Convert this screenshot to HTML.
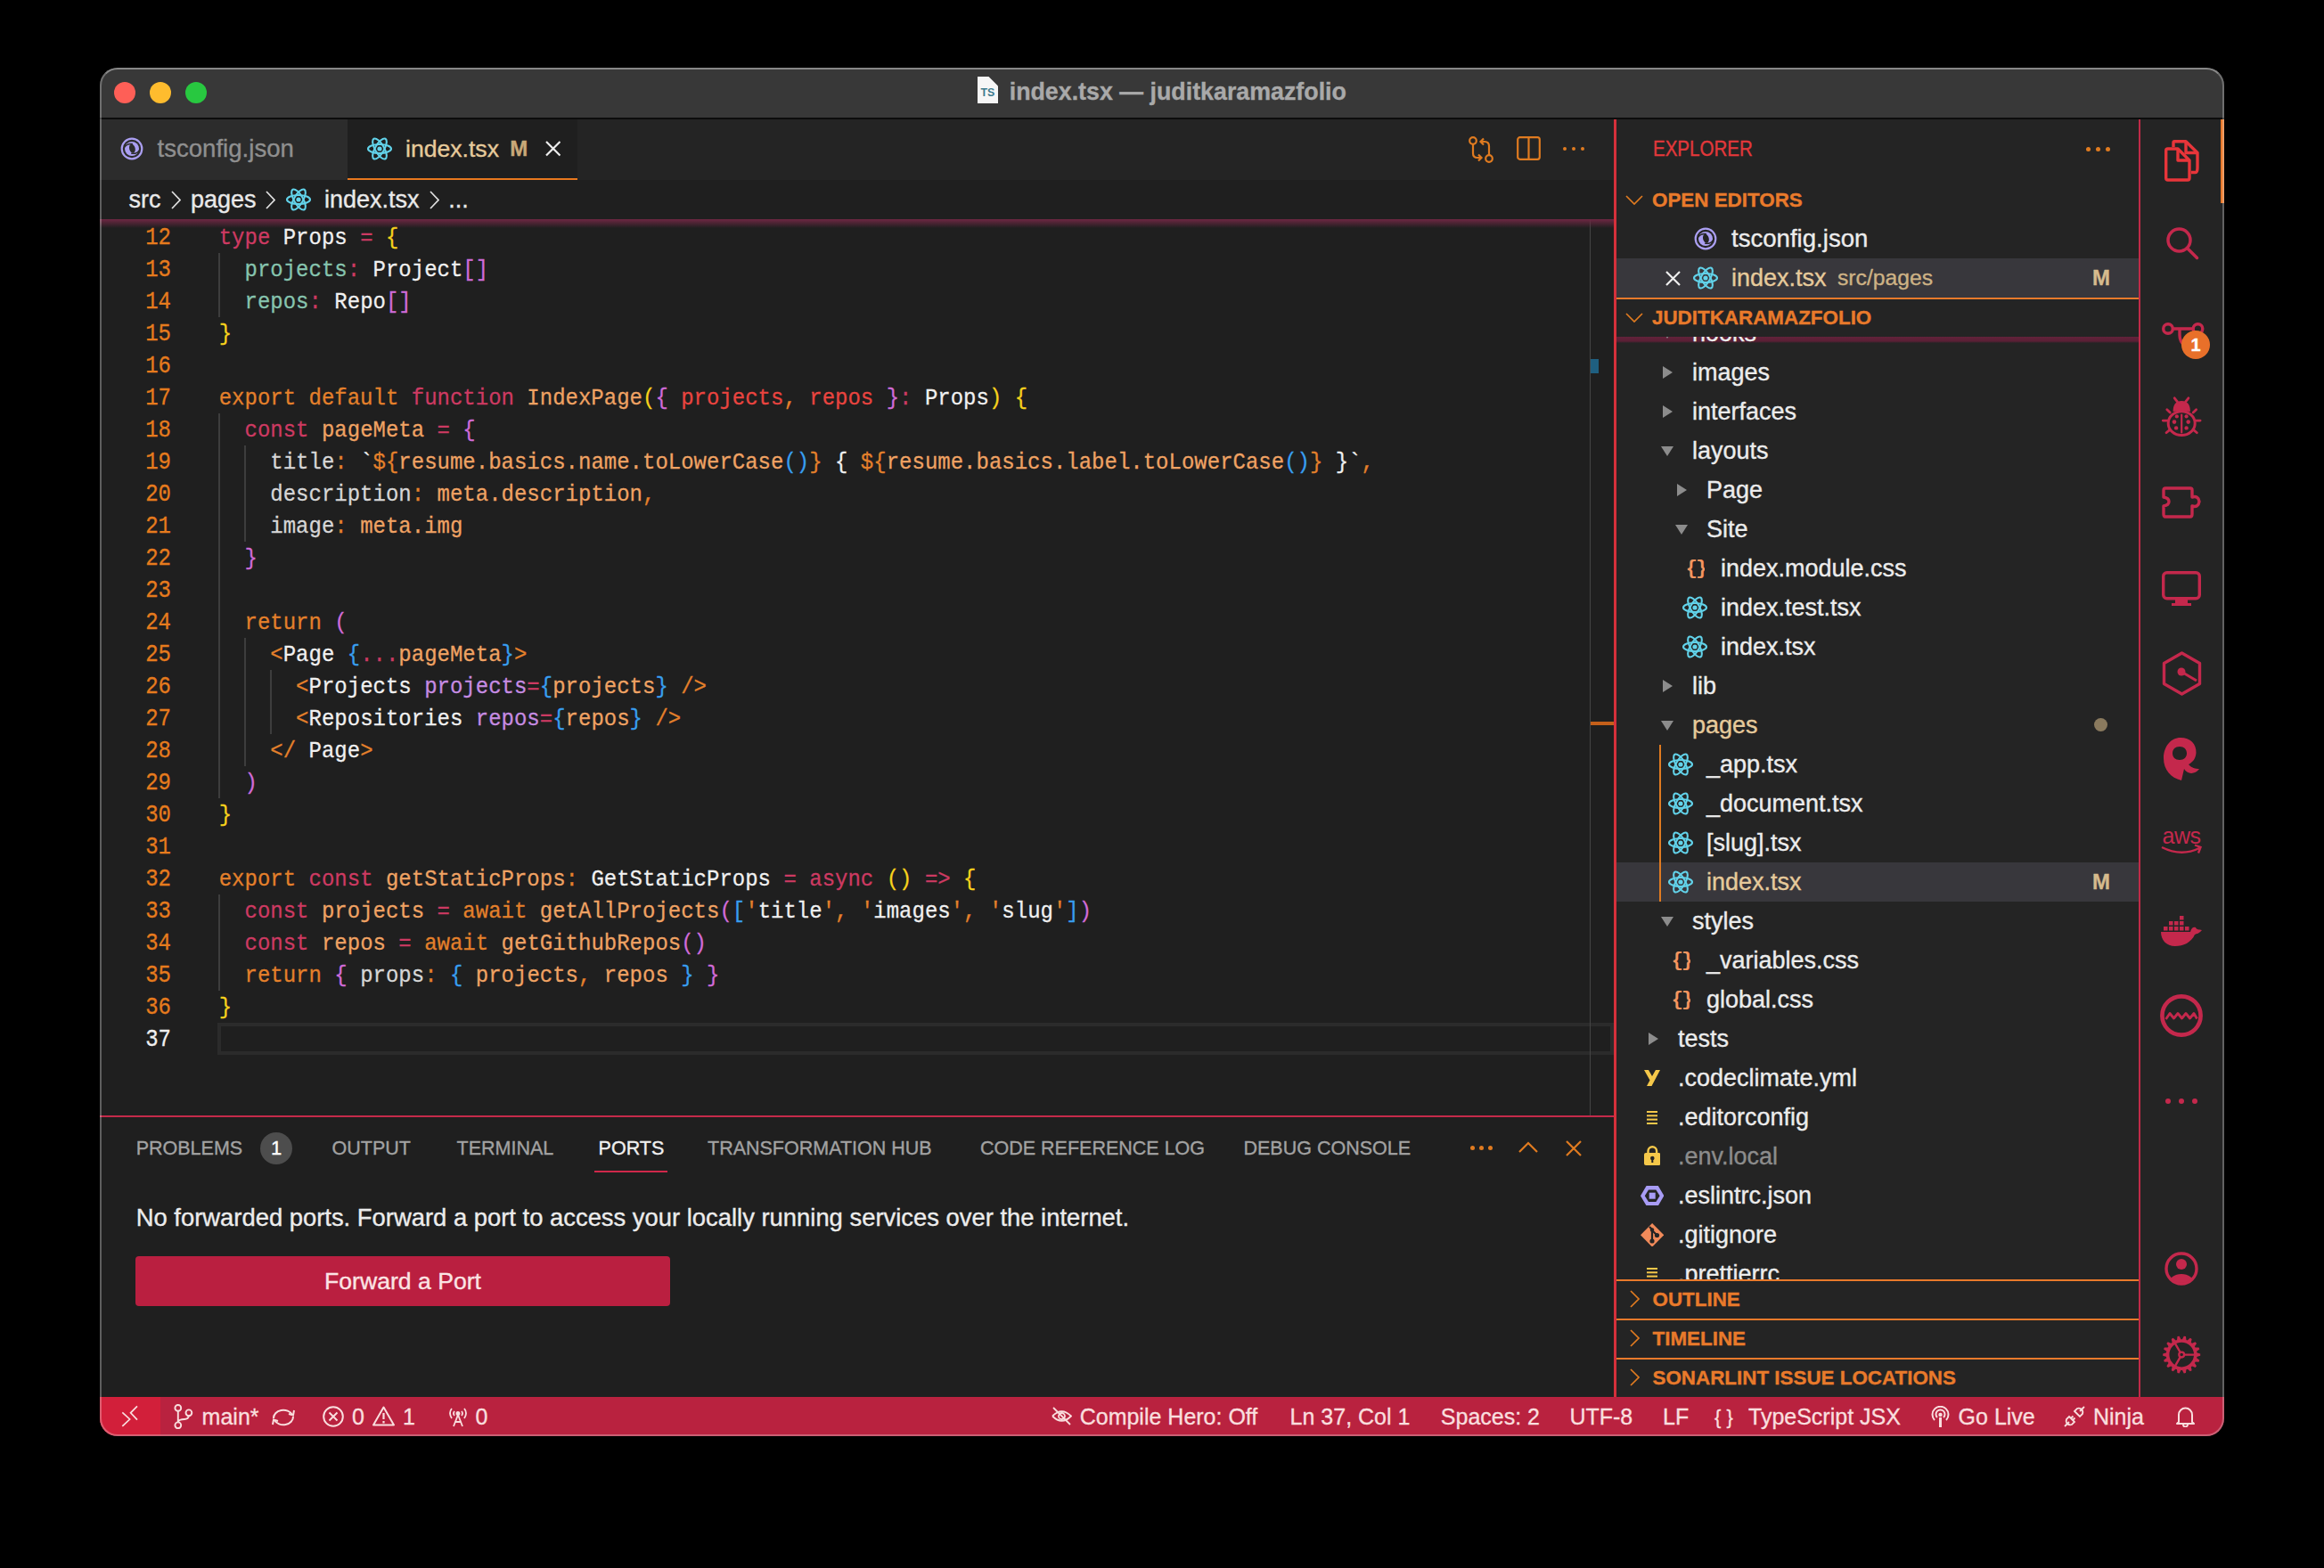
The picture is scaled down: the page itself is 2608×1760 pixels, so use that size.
<!DOCTYPE html>
<html><head><meta charset="utf-8"><style>
*{margin:0;padding:0;box-sizing:border-box}
html,body{width:2608px;height:1760px;background:#000;overflow:hidden}
body{font-family:"Liberation Sans",sans-serif;position:relative;-webkit-text-stroke:0.35px currentColor}
.a{position:absolute}
.win{position:absolute;left:112px;top:76px;width:2384px;height:1536px;border-radius:20px;overflow:hidden;background:#1f1f1f}
.winborder{position:absolute;left:112px;top:76px;width:2384px;height:1536px;border-radius:20px;border:2px solid rgba(255,255,255,0.28);border-top-color:rgba(255,255,255,0.40);pointer-events:none;z-index:10}
.title{left:0;top:0;width:2384px;height:57.5px;background:#383838;border-bottom:2.2px solid #0c0c0c;z-index:3}
.dot{position:absolute;width:24.5px;height:24.5px;border-radius:50%;top:15.75px}
.ttl{position:absolute;top:-1px;height:56px;line-height:56px;font-weight:700;font-size:26.8px;color:#a9a9a9;white-space:pre}
.tabs{left:0;top:56px;width:1699px;height:70px;background:#242424}
.tab{position:absolute;top:0;height:70px;line-height:70px;font-size:27px;white-space:pre}
.crumbs{left:0;top:126px;width:1699px;height:44px;background:#1f1f1f;font-size:27px;line-height:44px;color:#e9e9e9;white-space:pre}
.editor{left:0;top:170px;width:1699px;height:1006px;background:#1f1f1f;overflow:hidden}
.code{position:absolute;left:133.7px;font-family:"Liberation Mono",monospace;font-size:24px;line-height:36px;white-space:pre;color:#eeeeee}
.ln{position:absolute;left:0;width:80px;height:36px;text-align:right;font-family:"Liberation Mono",monospace;font-size:24px;line-height:36px;color:#e67b1d;transform:scaleY(1.13);transform-origin:0 24.4px;-webkit-text-stroke:0.25px currentColor}
.cl{position:absolute;left:133.7px;height:36px;font-family:"Liberation Mono",monospace;font-size:24px;line-height:36px;white-space:pre;color:#eeeeee;transform:scaleY(1.11);transform-origin:0 24.4px;-webkit-text-stroke:0.25px currentColor}
.ig{position:absolute;width:2px;background:#3d3d3d}
.kw{color:#cd3a62}.ex{color:#e4802b}.fn{color:#efa263}.w{color:#f0f0f0}.tl{color:#86c4ae}.lg{color:#d6d6d6}
.y{color:#f7d21c}.p{color:#d06bd8}.b{color:#389ef0}.r{color:#e9443f}.at{color:#c68be2}
.sidebar{left:1702px;top:56px;width:586px;height:1436px;background:#242424}
.sbl{position:absolute;left:1699.2px;top:56px;width:3px;height:1436px;background:#d5303b}
.abl{position:absolute;left:2288px;top:56px;width:2px;height:1436px;background:#c02a48}
.act{left:2290px;top:56px;width:94px;height:1436px;background:#242424}
.row{position:absolute;left:0;width:586px;height:44px;line-height:44px;font-size:27px;color:#ececec;white-space:pre}
.hdr{position:absolute;left:0;width:586px;height:44px;line-height:46px;font-size:22.4px;font-weight:700;color:#e97a2b;white-space:pre}
.hb{position:absolute;left:0;width:586px;height:2px;background:#e97a2b}
.panel{left:0;top:1176px;width:1699px;height:316px;background:#1f1f1f;border-top:2px solid #c42a4a}
.ptab{position:absolute;top:0;height:70px;line-height:70px;font-size:21.5px;color:#a2a2a2;white-space:pre}
.status{left:0;top:1492px;width:2384px;height:44px;background:#b9223f;color:#f9dede;font-size:25px;line-height:43px;white-space:pre}
.si{position:absolute;top:1px;margin-left:-1px}
</style></head><body>
<div class="win">
<div class="a title">
    <div class="dot" style="left:15.75px;background:#fe5f57"></div>
    <div class="dot" style="left:55.75px;background:#febc2e"></div>
    <div class="dot" style="left:95.75px;background:#28c840"></div>
    <svg class="a" style="left:984.7px;top:9.9px" width="23" height="30" viewBox="0 0 23 30"><path d="M0 0 H12.5 L23 10.5 V30 H0 Z" fill="#f6f6f6"/><text x="11.4" y="22" text-anchor="middle" font-family="Liberation Sans" font-weight="700" font-size="12.4" fill="#3f7b8e" style="-webkit-text-stroke:0">TS</text></svg>
    <div class="ttl" style="left:1020.7px">index.tsx — juditkaramazfolio</div>
  </div>
<div class="a tabs"><div class="tab" style="left:0;width:278px;background:#2c2c2c;color:#8f8f8f"><svg class="a" style="left:20px;top:18.700000000000003px;" width="32" height="32" viewBox="0 0 32 32"><circle cx="16" cy="16" r="11.3" fill="none" stroke="#ab9ff2" stroke-width="2.2"/><circle cx="16" cy="16" r="8" fill="#ab9ff2"/><ellipse cx="16.4" cy="15.8" rx="3.3" ry="5.1" transform="rotate(-14 16.4 15.8)" fill="#2c2c2c"/><path d="M7.8 14.2 Q10.5 10 16.8 10.6" stroke="#2c2c2c" stroke-width="1.5" fill="none"/><path d="M24.2 17.8 Q21.5 22 15.2 21.2" stroke="#2c2c2c" stroke-width="1.5" fill="none"/></svg><span class="a" style="left:64.5px;font-size:27.6px">tsconfig.json</span></div><div class="tab" style="left:278px;width:258px;background:#1f1f1f;color:#e6ca9b"><svg class="a" style="left:21.799999999999997px;top:21.799999999999997px;" width="28" height="26" viewBox="0 0 28 26"><g fill="none" stroke="#62d3ea" stroke-width="2.1"><ellipse cx="14" cy="13" rx="13" ry="5"/><ellipse cx="14" cy="13" rx="13" ry="5" transform="rotate(60 14 13)"/><ellipse cx="14" cy="13" rx="13" ry="5" transform="rotate(120 14 13)"/></g><circle cx="14" cy="13" r="2.6" fill="#62d3ea"/></svg><span class="a" style="left:65px;font-size:26.6px">index.tsx</span><span class="a" style="left:182.3px;color:#c8a878;font-weight:700;font-size:24px">M</span><svg class="a" style="left:221.7px;top:26.4px;" width="17.5" height="17.5" viewBox="0 0 17.5 17.5"><path d="M1 1 L16.5 16.5 M16.5 1 L1 16.5" stroke="#eeeeee" stroke-width="2.2"/></svg><div class="a" style="left:0;top:68px;width:258px;height:2px;background:#e8781e"></div></div><svg class="a" style="left:1536px;top:20.8px;" width="30" height="31" viewBox="0 0 30 31"><g fill="none" stroke="#e07b20" stroke-width="2.2"><circle cx="5" cy="5" r="3.8"/><circle cx="23" cy="25" r="3.8"/><path d="M5 9 V19 Q5 24 10 24 H14 M11 20.5 L14.5 24 L11 27.5"/><path d="M23 21 V11 Q23 6 18 6 H14 M17 2.5 L13.5 6 L17 9.5"/></g></svg><svg class="a" style="left:1590px;top:21px;" width="27" height="27" viewBox="0 0 27 27"><g fill="none" stroke="#e07b20" stroke-width="2.2"><rect x="1.2" y="1.2" width="24.6" height="24.6" rx="2.5"/><path d="M13.5 1.2 V25.8"/></g></svg><div class="a" style="left:1641.7px;top:32.7px;width:4.6px;height:4.6px;border-radius:50%;background:#e07b20"></div><div class="a" style="left:1651.7px;top:32.7px;width:4.6px;height:4.6px;border-radius:50%;background:#e07b20"></div><div class="a" style="left:1661.7px;top:32.7px;width:4.6px;height:4.6px;border-radius:50%;background:#e07b20"></div></div>
<div class="a crumbs"><span class="a" style="left:32.5px">src</span><svg class="a" style="left:80.4px;top:12px;" width="11" height="21" viewBox="0 0 11 21"><path d="M1 1 L10 10.5 L1 20" fill="none" stroke="#e0e0e0" stroke-width="1.7"/></svg><span class="a" style="left:102px">pages</span><svg class="a" style="left:186px;top:12px;" width="11" height="21" viewBox="0 0 11 21"><path d="M1 1 L10 10.5 L1 20" fill="none" stroke="#e0e0e0" stroke-width="1.7"/></svg><svg class="a" style="left:208.7px;top:9px;" width="28" height="26" viewBox="0 0 28 26"><g fill="none" stroke="#62d3ea" stroke-width="2.1"><ellipse cx="14" cy="13" rx="13" ry="5"/><ellipse cx="14" cy="13" rx="13" ry="5" transform="rotate(60 14 13)"/><ellipse cx="14" cy="13" rx="13" ry="5" transform="rotate(120 14 13)"/></g><circle cx="14" cy="13" r="2.6" fill="#62d3ea"/></svg><span class="a" style="left:252px">index.tsx</span><svg class="a" style="left:369.6px;top:12px;" width="11" height="21" viewBox="0 0 11 21"><path d="M1 1 L10 10.5 L1 20" fill="none" stroke="#e0e0e0" stroke-width="1.7"/></svg><span class="a" style="left:391.3px">...</span></div>
<div class="a editor"><div class="a" style="left:132px;top:902px;width:1567px;height:36px;border:4px solid #2b2b2b"></div><div class="ig" style="left:133px;top:38px;height:72px"></div><div class="ig" style="left:133px;top:218px;height:432px"></div><div class="ig" style="left:162px;top:254px;height:108px"></div><div class="ig" style="left:162px;top:470px;height:144px"></div><div class="ig" style="left:191px;top:506px;height:72px"></div><div class="ig" style="left:133px;top:758px;height:108px"></div><div class="ln" style="top:4.2px;">12</div><div class="ln" style="top:40.2px;">13</div><div class="ln" style="top:76.2px;">14</div><div class="ln" style="top:112.2px;">15</div><div class="ln" style="top:148.2px;">16</div><div class="ln" style="top:184.2px;">17</div><div class="ln" style="top:220.2px;">18</div><div class="ln" style="top:256.2px;">19</div><div class="ln" style="top:292.2px;">20</div><div class="ln" style="top:328.2px;">21</div><div class="ln" style="top:364.2px;">22</div><div class="ln" style="top:400.2px;">23</div><div class="ln" style="top:436.2px;">24</div><div class="ln" style="top:472.2px;">25</div><div class="ln" style="top:508.2px;">26</div><div class="ln" style="top:544.2px;">27</div><div class="ln" style="top:580.2px;">28</div><div class="ln" style="top:616.2px;">29</div><div class="ln" style="top:652.2px;">30</div><div class="ln" style="top:688.2px;">31</div><div class="ln" style="top:724.2px;">32</div><div class="ln" style="top:760.2px;">33</div><div class="ln" style="top:796.2px;">34</div><div class="ln" style="top:832.2px;">35</div><div class="ln" style="top:868.2px;">36</div><div class="ln" style="top:904.2px;color:#f0f0f0">37</div><div class="cl" style="top:3.6px"><span class="kw">type</span> <span class="w">Props</span> <span class="kw">=</span> <span class="y">{</span></div><div class="cl" style="top:39.6px">  <span class="tl">projects</span><span class="kw">:</span> <span class="w">Project</span><span class="p">[]</span></div><div class="cl" style="top:75.6px">  <span class="tl">repos</span><span class="kw">:</span> <span class="w">Repo</span><span class="p">[]</span></div><div class="cl" style="top:111.6px"><span class="y">}</span></div><div class="cl" style="top:147.6px"></div><div class="cl" style="top:183.6px"><span class="ex">export default</span> <span class="kw">function</span> <span class="fn">IndexPage</span><span class="y">(</span><span class="p">{</span> <span class="r">projects</span><span class="ex">,</span> <span class="r">repos</span> <span class="p">}</span><span class="kw">:</span> <span class="w">Props</span><span class="y">)</span> <span class="y">{</span></div><div class="cl" style="top:219.6px">  <span class="kw">const</span> <span class="fn">pageMeta</span> <span class="kw">=</span> <span class="p">{</span></div><div class="cl" style="top:255.6px">    <span class="lg">title</span><span class="ex">:</span> <span class="bt">`</span><span class="ex">${</span><span class="fn">resume.basics.name.toLowerCase</span><span class="b">()</span><span class="ex">}</span><span class="w"> { </span><span class="ex">${</span><span class="fn">resume.basics.label.toLowerCase</span><span class="b">()</span><span class="ex">}</span><span class="w"> }</span><span class="bt">`</span><span class="ex">,</span></div><div class="cl" style="top:291.6px">    <span class="lg">description</span><span class="ex">:</span> <span class="fn">meta.description</span><span class="ex">,</span></div><div class="cl" style="top:327.6px">    <span class="lg">image</span><span class="ex">:</span> <span class="fn">meta.img</span></div><div class="cl" style="top:363.6px">  <span class="p">}</span></div><div class="cl" style="top:399.6px"></div><div class="cl" style="top:435.6px">  <span class="ex">return</span> <span class="p">(</span></div><div class="cl" style="top:471.6px">    <span class="ex">&lt;</span><span class="w">Page</span> <span class="b">{</span><span class="kw">...</span><span class="fn">pageMeta</span><span class="b">}</span><span class="ex">&gt;</span></div><div class="cl" style="top:507.6px">      <span class="ex">&lt;</span><span class="w">Projects</span> <span class="at">projects</span><span class="kw">=</span><span class="b">{</span><span class="fn">projects</span><span class="b">}</span> <span class="ex">/&gt;</span></div><div class="cl" style="top:543.6px">      <span class="ex">&lt;</span><span class="w">Repositories</span> <span class="at">repos</span><span class="kw">=</span><span class="b">{</span><span class="fn">repos</span><span class="b">}</span> <span class="ex">/&gt;</span></div><div class="cl" style="top:579.6px">    <span class="ex">&lt;/</span> <span class="w">Page</span><span class="ex">&gt;</span></div><div class="cl" style="top:615.6px">  <span class="p">)</span></div><div class="cl" style="top:651.6px"><span class="y">}</span></div><div class="cl" style="top:687.6px"></div><div class="cl" style="top:723.6px"><span class="ex">export</span> <span class="kw">const</span> <span class="fn">getStaticProps</span><span class="ex">:</span> <span class="w">GetStaticProps</span> <span class="kw">=</span> <span class="kw">async</span> <span class="y">()</span> <span class="kw">=&gt;</span> <span class="y">{</span></div><div class="cl" style="top:759.6px">  <span class="kw">const</span> <span class="fn">projects</span> <span class="kw">=</span> <span class="ex">await</span> <span class="fn">getAllProjects</span><span class="p">(</span><span class="b">[</span><span class="ex">'</span><span class="w">title</span><span class="ex">'</span><span class="ex">,</span> <span class="ex">'</span><span class="w">images</span><span class="ex">'</span><span class="ex">,</span> <span class="ex">'</span><span class="w">slug</span><span class="ex">'</span><span class="b">]</span><span class="p">)</span></div><div class="cl" style="top:795.6px">  <span class="kw">const</span> <span class="fn">repos</span> <span class="kw">=</span> <span class="ex">await</span> <span class="fn">getGithubRepos</span><span class="p">()</span></div><div class="cl" style="top:831.6px">  <span class="ex">return</span> <span class="p">{</span> <span class="lg">props</span><span class="ex">:</span> <span class="b">{</span> <span class="fn">projects</span><span class="ex">,</span> <span class="fn">repos</span> <span class="b">}</span> <span class="p">}</span></div><div class="cl" style="top:867.6px"><span class="y">}</span></div><div class="cl" style="top:903.6px"></div><div class="a" style="left:1672px;top:0;width:1.2px;height:1006px;background:#444"></div><div class="a" style="left:1673px;top:157px;width:9px;height:16px;background:#1f5f80"></div><div class="a" style="left:1673px;top:564px;width:26px;height:4px;background:#c4601a"></div><div class="a" style="left:0;top:0;width:1699px;height:10px;background:linear-gradient(#6e2742,rgba(60,20,35,0))"></div></div>
<div class="a panel"><div class="ptab" style="left:40.7px;color:#a2a2a2">PROBLEMS</div><div class="ptab" style="left:260.5px;color:#a2a2a2">OUTPUT</div><div class="ptab" style="left:400.6px;color:#a2a2a2">TERMINAL</div><div class="ptab" style="left:559.6px;color:#f0f0f0">PORTS</div><div class="ptab" style="left:682px;color:#a2a2a2">TRANSFORMATION HUB</div><div class="ptab" style="left:988px;color:#a2a2a2">CODE REFERENCE LOG</div><div class="ptab" style="left:1283.5px;color:#a2a2a2">DEBUG CONSOLE</div><div class="a" style="left:180px;top:16.7px;width:36px;height:36px;border-radius:50%;background:#4d4d4d;color:#fff;font-size:22px;line-height:36px;text-align:center">1</div><div class="a" style="left:555px;top:60px;width:82px;height:2px;background:#d0284a"></div><div class="a" style="left:1537.5px;top:32.3px;width:5px;height:5px;border-radius:50%;background:#e07b20"></div><div class="a" style="left:1547.5px;top:32.3px;width:5px;height:5px;border-radius:50%;background:#e07b20"></div><div class="a" style="left:1557.5px;top:32.3px;width:5px;height:5px;border-radius:50%;background:#e07b20"></div><svg class="a" style="left:1592px;top:27px;" width="22" height="13" viewBox="0 0 22 13"><path d="M1 12 L11 2 L21 12" fill="none" stroke="#e07b20" stroke-width="2.2"/></svg><svg class="a" style="left:1645px;top:26px;" width="18" height="18" viewBox="0 0 18 18"><path d="M1 1 L17 17 M17 1 L1 17" fill="none" stroke="#e07b20" stroke-width="2.2"/></svg><div class="a" style="left:40.7px;top:90.5px;height:44px;line-height:44px;font-size:27.4px;color:#ececec;white-space:pre">No forwarded ports. Forward a port to access your locally running services over the internet.</div><div class="a" style="left:40px;top:156px;width:600px;height:56px;border-radius:4px;background:#ba1f40;color:#fbe4e4;font-size:26.6px;line-height:56px;text-align:center">Forward a Port</div></div>
<div class="sbl"></div>
<div class="a sidebar"><div class="a" style="left:40.5px;top:0;height:70px;line-height:71px;font-size:23.4px;color:#e3383b;transform:scaleX(0.877);transform-origin:0 0">EXPLORER</div><div class="a" style="left:526.5px;top:32.5px;width:5px;height:5px;border-radius:50%;background:#e07b20"></div><div class="a" style="left:537.5px;top:32.5px;width:5px;height:5px;border-radius:50%;background:#e07b20"></div><div class="a" style="left:548.5px;top:32.5px;width:5px;height:5px;border-radius:50%;background:#e07b20"></div><svg class="a" style="left:10px;top:87px;" width="20" height="11" viewBox="0 0 20 11"><path d="M1 1 L10 10 L19 1" fill="none" stroke="#e07b20" stroke-width="1.7"/></svg><div class="hdr" style="top:70px;left:40px">OPEN EDITORS</div><div class="row" style="top:114px"><span class="a" style="left:129px;font-size:27.6px">tsconfig.json</span></div><svg class="a" style="left:84px;top:120px;" width="32" height="32" viewBox="0 0 32 32"><circle cx="16" cy="16" r="11.3" fill="none" stroke="#ab9ff2" stroke-width="2.2"/><circle cx="16" cy="16" r="8" fill="#ab9ff2"/><ellipse cx="16.4" cy="15.8" rx="3.3" ry="5.1" transform="rotate(-14 16.4 15.8)" fill="#242424"/><path d="M7.8 14.2 Q10.5 10 16.8 10.6" stroke="#242424" stroke-width="1.5" fill="none"/><path d="M24.2 17.8 Q21.5 22 15.2 21.2" stroke="#242424" stroke-width="1.5" fill="none"/></svg><div class="row" style="top:158px;background:#38373c"><span class="a" style="left:129px;color:#e6ca9b">index.tsx</span><span class="a" style="left:248px;color:#cdb285;font-size:24.7px">src/pages</span><span class="a" style="left:534px;color:#d6bb8d;font-weight:700;font-size:24px">M</span></div><svg class="a" style="left:55px;top:172px;" width="17" height="17" viewBox="0 0 17 17"><path d="M1 1 L16 16 M16 1 L1 16" stroke="#eeeeee" stroke-width="2.2"/></svg><svg class="a" style="left:86px;top:167px;" width="28" height="26" viewBox="0 0 28 26"><g fill="none" stroke="#62d3ea" stroke-width="2.1"><ellipse cx="14" cy="13" rx="13" ry="5"/><ellipse cx="14" cy="13" rx="13" ry="5" transform="rotate(60 14 13)"/><ellipse cx="14" cy="13" rx="13" ry="5" transform="rotate(120 14 13)"/></g><circle cx="14" cy="13" r="2.6" fill="#62d3ea"/></svg><svg class="a" style="left:10px;top:219px;" width="20" height="11" viewBox="0 0 20 11"><path d="M1 1 L10 10 L19 1" fill="none" stroke="#e07b20" stroke-width="1.7"/></svg><div class="hdr" style="top:202px;left:40px">JUDITKARAMAZFOLIO</div><div class="hb" style="top:202px"></div><div class="a" style="left:0;top:246px;width:586px;height:1058px;overflow:hidden"><div class="a" style="left:0;top:0;width:586px;height:7px;background:linear-gradient(#62223a 0,#5a1f35 5px,rgba(50,25,35,0) 7px)"></div><div class="row" style="top:-26px;"><span class="a" style="left:85px;color:#ececec">hooks</span></div><svg class="a" style="left:49.5px;top:-9px;" width="14" height="11" viewBox="0 0 14 11"><path d="M0 0 L14 0 L7 11 Z" fill="#8c8c8c"/></svg><div class="row" style="top:18px;"><span class="a" style="left:85px;color:#ececec">images</span></div><svg class="a" style="left:52px;top:33px;" width="11" height="14" viewBox="0 0 11 14"><path d="M0 0 L11 7 L0 14 Z" fill="#8c8c8c"/></svg><div class="row" style="top:62px;"><span class="a" style="left:85px;color:#ececec">interfaces</span></div><svg class="a" style="left:52px;top:77px;" width="11" height="14" viewBox="0 0 11 14"><path d="M0 0 L11 7 L0 14 Z" fill="#8c8c8c"/></svg><div class="row" style="top:106px;"><span class="a" style="left:85px;color:#ececec">layouts</span></div><svg class="a" style="left:49.5px;top:123px;" width="14" height="11" viewBox="0 0 14 11"><path d="M0 0 L14 0 L7 11 Z" fill="#8c8c8c"/></svg><div class="row" style="top:150px;"><span class="a" style="left:101px;color:#ececec">Page</span></div><svg class="a" style="left:68px;top:165px;" width="11" height="14" viewBox="0 0 11 14"><path d="M0 0 L11 7 L0 14 Z" fill="#8c8c8c"/></svg><div class="row" style="top:194px;"><span class="a" style="left:101px;color:#ececec">Site</span></div><svg class="a" style="left:65.5px;top:211px;" width="14" height="11" viewBox="0 0 14 11"><path d="M0 0 L14 0 L7 11 Z" fill="#8c8c8c"/></svg><div class="row" style="top:238px;"><span class="a" style="left:117px;color:#ececec">index.module.css</span></div><svg class="a" style="left:78.5px;top:249px;" width="20" height="22" viewBox="0 0 20 22"><text x="10" y="17" text-anchor="middle" font-family="Liberation Mono" font-weight="700" font-size="22" fill="#f5955f" letter-spacing="-2">{}</text></svg><div class="row" style="top:282px;"><span class="a" style="left:117px;color:#ececec">index.test.tsx</span></div><svg class="a" style="left:74px;top:291px;" width="28" height="26" viewBox="0 0 28 26"><g fill="none" stroke="#62d3ea" stroke-width="2.1"><ellipse cx="14" cy="13" rx="13" ry="5"/><ellipse cx="14" cy="13" rx="13" ry="5" transform="rotate(60 14 13)"/><ellipse cx="14" cy="13" rx="13" ry="5" transform="rotate(120 14 13)"/></g><circle cx="14" cy="13" r="2.6" fill="#62d3ea"/></svg><div class="row" style="top:326px;"><span class="a" style="left:117px;color:#ececec">index.tsx</span></div><svg class="a" style="left:74px;top:335px;" width="28" height="26" viewBox="0 0 28 26"><g fill="none" stroke="#62d3ea" stroke-width="2.1"><ellipse cx="14" cy="13" rx="13" ry="5"/><ellipse cx="14" cy="13" rx="13" ry="5" transform="rotate(60 14 13)"/><ellipse cx="14" cy="13" rx="13" ry="5" transform="rotate(120 14 13)"/></g><circle cx="14" cy="13" r="2.6" fill="#62d3ea"/></svg><div class="row" style="top:370px;"><span class="a" style="left:85px;color:#ececec">lib</span></div><svg class="a" style="left:52px;top:385px;" width="11" height="14" viewBox="0 0 11 14"><path d="M0 0 L11 7 L0 14 Z" fill="#8c8c8c"/></svg><div class="row" style="top:414px;"><span class="a" style="left:85px;color:#e6ca9b">pages</span></div><svg class="a" style="left:49.5px;top:431px;" width="14" height="11" viewBox="0 0 14 11"><path d="M0 0 L14 0 L7 11 Z" fill="#8c8c8c"/></svg><div class="row" style="top:458px;"><span class="a" style="left:101px;color:#ececec">_app.tsx</span></div><svg class="a" style="left:58px;top:467px;" width="28" height="26" viewBox="0 0 28 26"><g fill="none" stroke="#62d3ea" stroke-width="2.1"><ellipse cx="14" cy="13" rx="13" ry="5"/><ellipse cx="14" cy="13" rx="13" ry="5" transform="rotate(60 14 13)"/><ellipse cx="14" cy="13" rx="13" ry="5" transform="rotate(120 14 13)"/></g><circle cx="14" cy="13" r="2.6" fill="#62d3ea"/></svg><div class="row" style="top:502px;"><span class="a" style="left:101px;color:#ececec">_document.tsx</span></div><svg class="a" style="left:58px;top:511px;" width="28" height="26" viewBox="0 0 28 26"><g fill="none" stroke="#62d3ea" stroke-width="2.1"><ellipse cx="14" cy="13" rx="13" ry="5"/><ellipse cx="14" cy="13" rx="13" ry="5" transform="rotate(60 14 13)"/><ellipse cx="14" cy="13" rx="13" ry="5" transform="rotate(120 14 13)"/></g><circle cx="14" cy="13" r="2.6" fill="#62d3ea"/></svg><div class="row" style="top:546px;"><span class="a" style="left:101px;color:#ececec">[slug].tsx</span></div><svg class="a" style="left:58px;top:555px;" width="28" height="26" viewBox="0 0 28 26"><g fill="none" stroke="#62d3ea" stroke-width="2.1"><ellipse cx="14" cy="13" rx="13" ry="5"/><ellipse cx="14" cy="13" rx="13" ry="5" transform="rotate(60 14 13)"/><ellipse cx="14" cy="13" rx="13" ry="5" transform="rotate(120 14 13)"/></g><circle cx="14" cy="13" r="2.6" fill="#62d3ea"/></svg><div class="row" style="top:590px;background:#38373c;"><span class="a" style="left:101px;color:#e6ca9b">index.tsx</span><span class="a" style="left:534px;color:#d6bb8d;font-weight:700;font-size:24px">M</span></div><svg class="a" style="left:58px;top:599px;" width="28" height="26" viewBox="0 0 28 26"><g fill="none" stroke="#62d3ea" stroke-width="2.1"><ellipse cx="14" cy="13" rx="13" ry="5"/><ellipse cx="14" cy="13" rx="13" ry="5" transform="rotate(60 14 13)"/><ellipse cx="14" cy="13" rx="13" ry="5" transform="rotate(120 14 13)"/></g><circle cx="14" cy="13" r="2.6" fill="#62d3ea"/></svg><div class="row" style="top:634px;"><span class="a" style="left:85px;color:#ececec">styles</span></div><svg class="a" style="left:49.5px;top:651px;" width="14" height="11" viewBox="0 0 14 11"><path d="M0 0 L14 0 L7 11 Z" fill="#8c8c8c"/></svg><div class="row" style="top:678px;"><span class="a" style="left:101px;color:#ececec">_variables.css</span></div><svg class="a" style="left:62.5px;top:689px;" width="20" height="22" viewBox="0 0 20 22"><text x="10" y="17" text-anchor="middle" font-family="Liberation Mono" font-weight="700" font-size="22" fill="#f5955f" letter-spacing="-2">{}</text></svg><div class="row" style="top:722px;"><span class="a" style="left:101px;color:#ececec">global.css</span></div><svg class="a" style="left:62.5px;top:733px;" width="20" height="22" viewBox="0 0 20 22"><text x="10" y="17" text-anchor="middle" font-family="Liberation Mono" font-weight="700" font-size="22" fill="#f5955f" letter-spacing="-2">{}</text></svg><div class="row" style="top:766px;"><span class="a" style="left:69px;color:#ececec">tests</span></div><svg class="a" style="left:36px;top:781px;" width="11" height="14" viewBox="0 0 11 14"><path d="M0 0 L11 7 L0 14 Z" fill="#8c8c8c"/></svg><div class="row" style="top:810px;"><span class="a" style="left:69px;color:#ececec">.codeclimate.yml</span></div><svg class="a" style="left:31px;top:823px;" width="18" height="18" viewBox="0 0 18 18"><path d="M0 0 H5 L9 7 L13 0 H18 L8.5 18 H3 L6.5 11.5 Z" fill="#f5c84a"/></svg><div class="row" style="top:854px;"><span class="a" style="left:69px;color:#ececec">.editorconfig</span></div><svg class="a" style="left:34px;top:868.5px;" width="12" height="15" viewBox="0 0 12 15"><rect x="0" y="0" width="12" height="2" fill="#f5c84a"/><rect x="0" y="4.3" width="12" height="2" fill="#f5c84a"/><rect x="0" y="8.6" width="12" height="2" fill="#f5c84a"/><rect x="0" y="13" width="12" height="2" fill="#f5c84a"/></svg><div class="row" style="top:898px;"><span class="a" style="left:69px;color:#8c8c8c">.env.local</span></div><svg class="a" style="left:30.7px;top:908px;" width="18.6" height="22" viewBox="0 0 18.6 22"><path d="M4.5 9 V6 A4.8 4.8 0 0 1 14.1 6 V9" fill="none" stroke="#f5c84a" stroke-width="2.4"/><rect x="0" y="8" width="18.6" height="14" rx="2" fill="#f5c84a"/><circle cx="9.3" cy="14" r="2.3" fill="#242424"/><rect x="8.3" y="14" width="2" height="5" fill="#242424"/></svg><div class="row" style="top:942px;"><span class="a" style="left:69px;color:#ececec">.eslintrc.json</span></div><svg class="a" style="left:26.8px;top:952.8px;" width="26.4" height="22.4" viewBox="0 0 26.4 22.4"><path d="M6.6 0 H19.8 L26.4 11.2 L19.8 22.4 H6.6 L0 11.2 Z" fill="#a89cf5"/><path d="M9 4.5 H17.4 L21.6 11.2 L17.4 17.9 H9 L4.8 11.2 Z" fill="#242424"/><rect x="9.7" y="7.7" width="7" height="7" fill="#a89cf5"/></svg><div class="row" style="top:986px;"><span class="a" style="left:69px;color:#ececec">.gitignore</span></div><svg class="a" style="left:27px;top:994.7px;" width="26.2" height="26.7" viewBox="0 0 26.2 26.7"><path d="M13.1 0 L26.2 13.3 L13.1 26.7 L0 13.3 Z" fill="#f08a5a" transform="translate(13.1 13.35) scale(1) translate(-13.1 -13.35)"/><path d="M10 4 L13 7 V20" stroke="#242424" stroke-width="2.2" fill="none"/><path d="M13 8 L18.5 13.5" stroke="#242424" stroke-width="2.2"/><circle cx="13" cy="20" r="2.6" fill="#242424"/><circle cx="18.5" cy="13.5" r="2.6" fill="#242424"/><circle cx="13" cy="7.5" r="2.2" fill="#242424"/></svg><div class="row" style="top:1030px;"><span class="a" style="left:69px;color:#ececec">.prettierrc</span></div><svg class="a" style="left:34px;top:1044.5px;" width="12" height="15" viewBox="0 0 12 15"><rect x="0" y="0" width="12" height="2" fill="#f5c84a"/><rect x="0" y="4.3" width="12" height="2" fill="#f5c84a"/><rect x="0" y="8.6" width="12" height="2" fill="#f5c84a"/><rect x="0" y="13" width="12" height="2" fill="#f5c84a"/></svg><div class="a" style="left:48.4px;top:458px;width:2px;height:176px;background:#e07b20"></div><div class="a" style="left:536px;top:428px;width:15px;height:15px;border-radius:50%;background:#8a7a5e"></div></div><svg class="a" style="left:15px;top:1316px;" width="11" height="20" viewBox="0 0 11 20"><path d="M1 1 L10 10 L1 19" fill="none" stroke="#e07b20" stroke-width="1.7"/></svg><div class="hdr" style="top:1304px;left:40.5px">OUTLINE</div><div class="hb" style="top:1304px"></div><svg class="a" style="left:15px;top:1360px;" width="11" height="20" viewBox="0 0 11 20"><path d="M1 1 L10 10 L1 19" fill="none" stroke="#e07b20" stroke-width="1.7"/></svg><div class="hdr" style="top:1348px;left:40.5px">TIMELINE</div><div class="hb" style="top:1348px"></div><svg class="a" style="left:15px;top:1404px;" width="11" height="20" viewBox="0 0 11 20"><path d="M1 1 L10 10 L1 19" fill="none" stroke="#e07b20" stroke-width="1.7"/></svg><div class="hdr" style="top:1392px;left:40.5px">SONARLINT ISSUE LOCATIONS</div><div class="hb" style="top:1392px"></div></div>
<div class="abl"></div>
<div class="a act"><div class="a" style="left:90px;top:0;width:4px;height:96px;background:#e8782a"></div><svg class="a" style="left:27px;top:25px;" width="39" height="47" viewBox="0 0 39 47"><g fill="none" stroke="#e8353a" stroke-width="3.4" stroke-linejoin="round"><path d="M10 8 V3 Q10 1.7 11.3 1.7 H24 L37 14.5 V31 Q37 36.5 35 36.5 H30"/><path d="M24 1.7 V14.5 H37"/><path d="M1.7 12 Q1.7 10 3.7 10 H15 L28 23 V43 Q28 45 26 45 H3.7 Q1.7 45 1.7 43 Z"/><path d="M15 10 V23 H28"/></g></svg><svg class="a" style="left:29px;top:123px;" width="37" height="37" viewBox="0 0 37 37"><g fill="none" stroke="#c4284c" stroke-width="3.5"><circle cx="14.5" cy="14.5" r="12.5"/><path d="M23.5 23.5 L34.5 34.5" stroke-linecap="round"/></g></svg><svg class="a" style="left:22px;top:225px;" width="50" height="34" viewBox="0 0 50 34"><g fill="none" stroke="#c4284c" stroke-width="3.4"><circle cx="9" cy="12" r="5.3"/><circle cx="42.5" cy="12" r="5.3"/><path d="M14.3 12 H37.2 M22 12 Q22 12 22 19 Q22 27 28 31"/></g></svg><div class="a" style="left:46px;top:239px;width:32px;height:32px;border-radius:50%;background:#e8702a;color:#fff;font-weight:700;font-size:20px;line-height:32px;text-align:center">1</div><svg class="a" style="left:18px;top:308px;" width="56" height="56" viewBox="0 0 56 56"><path d="M18.6 22 Q18.6 10 28.2 10 Q37.9 10 37.9 22 Q28.2 20.5 18.6 22 Z" fill="#c4284c"/><g fill="none" stroke="#c4284c" stroke-linecap="round"><path d="M20.2 6.8 L23.4 10.8 M35.9 6.8 L32.7 10.8" stroke-width="2.8"/><ellipse cx="28.2" cy="35.2" rx="15" ry="13.4" stroke-width="3"/><path d="M28.2 25.5 V45.4" stroke-width="2.2"/><path d="M11.8 19.8 L15.2 23 M7.3 32.1 H12.3 M11 45.7 L15.3 42.1 M44.6 19.8 L41.2 23 M49.1 32.1 H44.1 M45.4 45.7 L41.1 42.1" stroke-width="2.8"/></g><g fill="#c4284c"><circle cx="22.8" cy="27.4" r="2.1"/><circle cx="20" cy="33.6" r="2.3"/><circle cx="22.1" cy="40.4" r="2.2"/><circle cx="33.6" cy="27.4" r="2.1"/><circle cx="35.7" cy="33.6" r="2.3"/><circle cx="33.6" cy="40.4" r="2.2"/></g></svg><svg class="a" style="left:23px;top:414px;" width="46" height="37" viewBox="0 0 46 37"><path d="M3 4 Q3 2 5 2 H33 Q35 2 35 4 V12 Q42 10 43 17 Q42 24 35 22 V31 Q35 34 33 34 H5 Q3 34 3 31 V22 Q9 21 9 17 Q9 13 3 12 Z" fill="none" stroke="#c4284c" stroke-width="3.4" stroke-linejoin="round"/></svg><svg class="a" style="left:24px;top:509px;" width="44" height="40" viewBox="0 0 44 40"><rect x="1.7" y="1.7" width="40.6" height="29" rx="4" fill="none" stroke="#c4284c" stroke-width="3.4"/><path d="M15 31 H29 V36 H33 V39 H11 V36 H15 Z" fill="#c4284c"/></svg><svg class="a" style="left:24px;top:599px;" width="45" height="50" viewBox="0 0 45 50"><path d="M22.5 2 L42.5 13.5 V36.5 L22.5 48 L2.5 36.5 V13.5 Z" fill="none" stroke="#c4284c" stroke-width="3.4" stroke-linejoin="round"/><circle cx="22" cy="23" r="4.5" fill="#c4284c"/><path d="M22 23 L39 33" stroke="#c4284c" stroke-width="3"/></svg><svg class="a" style="left:25px;top:695px;" width="42" height="50" viewBox="0 0 42 50"><path d="M20 1 C31 1 38 8 37.5 18 C37 25 33 29 29 31 C32 35 37 36 41 36 C36 43 27 42 24 36 L21 49 C9 46 1 37 1 24 C1 11 9 1 20 1 Z M19 11 C14 11 11 14 11 18.5 C11 23 14 26 19 26 C24 26 27 23 27 18.5 C27 14 24 11 19 11 Z" fill="#c4284c" fill-rule="evenodd"/></svg><svg class="a" style="left:20px;top:796px;" width="52" height="36" viewBox="0 0 52 36"><text x="26" y="19" text-anchor="middle" font-family="Liberation Sans" font-size="25" fill="#c4284c" letter-spacing="-0.5">aws</text><path d="M4 23 Q26 34 46 24 M41 20.5 L47.5 23 L45 29.5" fill="none" stroke="#c4284c" stroke-width="2.4"/></svg><svg class="a" style="left:22px;top:896px;" width="48" height="34" viewBox="0 0 48 34"><rect x="4" y="12" width="4.5" height="4.5" fill="#c4284c"/><rect x="10" y="12" width="4.5" height="4.5" fill="#c4284c"/><rect x="16" y="12" width="4.5" height="4.5" fill="#c4284c"/><rect x="22" y="12" width="4.5" height="4.5" fill="#c4284c"/><rect x="28" y="12" width="4.5" height="4.5" fill="#c4284c"/><rect x="10" y="6" width="4.5" height="4.5" fill="#c4284c"/><rect x="16" y="6" width="4.5" height="4.5" fill="#c4284c"/><rect x="22" y="6" width="4.5" height="4.5" fill="#c4284c"/><rect x="22" y="0" width="4.5" height="4.5" fill="#c4284c"/><path d="M1 18 H34 C35 14 37 12 40 13 C41 16 44 15 47 16 C44 20 41 20 39 21 C35 30 26 34 17 34 C7 34 1 27 1 18 Z" fill="#c4284c"/></svg><svg class="a" style="left:22px;top:984px;" width="48" height="48" viewBox="0 0 48 48"><circle cx="24" cy="24" r="21.6" fill="none" stroke="#c4284c" stroke-width="4.6"/><path d="M6.5 28 L11 21.5 L15.5 27 L20 21.5 L24.5 27 L29 21.5 L33.5 27 L38 21.5 L41.5 27.5" fill="none" stroke="#c4284c" stroke-width="2.8" stroke-linejoin="round"/></svg><div class="a" style="left:27.8px;top:1100.8px;width:6.4px;height:6.4px;border-radius:50%;background:#c4284c"></div><div class="a" style="left:42.8px;top:1100.8px;width:6.4px;height:6.4px;border-radius:50%;background:#c4284c"></div><div class="a" style="left:57.8px;top:1100.8px;width:6.4px;height:6.4px;border-radius:50%;background:#c4284c"></div><svg class="a" style="left:27px;top:1273px;" width="38" height="38" viewBox="0 0 38 38"><defs><clipPath id="cc"><circle cx="19" cy="19" r="16"/></clipPath></defs><circle cx="19" cy="19" r="17" fill="none" stroke="#c4284c" stroke-width="3.4"/><circle cx="19" cy="14" r="6" fill="#c4284c"/><ellipse cx="19" cy="35" rx="14" ry="10" fill="#c4284c" clip-path="url(#cc)"/></svg><svg class="a" style="left:18px;top:1359.5px;" width="56" height="56" viewBox="0 0 56 56"><path d="M27.1 7.6 H29.3 L30.6 11.8 H25.8 Z" fill="#c4284c" transform="rotate(10 28.2 28.6)"/><path d="M27.1 7.6 H29.3 L30.6 11.8 H25.8 Z" fill="#c4284c" transform="rotate(30 28.2 28.6)"/><path d="M27.1 7.6 H29.3 L30.6 11.8 H25.8 Z" fill="#c4284c" transform="rotate(50 28.2 28.6)"/><path d="M27.1 7.6 H29.3 L30.6 11.8 H25.8 Z" fill="#c4284c" transform="rotate(70 28.2 28.6)"/><path d="M27.1 7.6 H29.3 L30.6 11.8 H25.8 Z" fill="#c4284c" transform="rotate(90 28.2 28.6)"/><path d="M27.1 7.6 H29.3 L30.6 11.8 H25.8 Z" fill="#c4284c" transform="rotate(110 28.2 28.6)"/><path d="M27.1 7.6 H29.3 L30.6 11.8 H25.8 Z" fill="#c4284c" transform="rotate(130 28.2 28.6)"/><path d="M27.1 7.6 H29.3 L30.6 11.8 H25.8 Z" fill="#c4284c" transform="rotate(150 28.2 28.6)"/><path d="M27.1 7.6 H29.3 L30.6 11.8 H25.8 Z" fill="#c4284c" transform="rotate(170 28.2 28.6)"/><path d="M27.1 7.6 H29.3 L30.6 11.8 H25.8 Z" fill="#c4284c" transform="rotate(190 28.2 28.6)"/><path d="M27.1 7.6 H29.3 L30.6 11.8 H25.8 Z" fill="#c4284c" transform="rotate(210 28.2 28.6)"/><path d="M27.1 7.6 H29.3 L30.6 11.8 H25.8 Z" fill="#c4284c" transform="rotate(230 28.2 28.6)"/><path d="M27.1 7.6 H29.3 L30.6 11.8 H25.8 Z" fill="#c4284c" transform="rotate(250 28.2 28.6)"/><path d="M27.1 7.6 H29.3 L30.6 11.8 H25.8 Z" fill="#c4284c" transform="rotate(270 28.2 28.6)"/><path d="M27.1 7.6 H29.3 L30.6 11.8 H25.8 Z" fill="#c4284c" transform="rotate(290 28.2 28.6)"/><path d="M27.1 7.6 H29.3 L30.6 11.8 H25.8 Z" fill="#c4284c" transform="rotate(310 28.2 28.6)"/><path d="M27.1 7.6 H29.3 L30.6 11.8 H25.8 Z" fill="#c4284c" transform="rotate(330 28.2 28.6)"/><path d="M27.1 7.6 H29.3 L30.6 11.8 H25.8 Z" fill="#c4284c" transform="rotate(350 28.2 28.6)"/><circle cx="28.2" cy="28.6" r="15.6" fill="none" stroke="#c4284c" stroke-width="3.6"/><circle cx="28.2" cy="28.6" r="2.9" fill="none" stroke="#c4284c" stroke-width="2.3"/><path d="M31.2 28.6 H43 M26.7 26 L20.3 14.9 M26.7 31.2 L20.3 42.3" stroke="#c4284c" stroke-width="2.4"/></svg></div>
<div class="a status"><div class="a" style="left:0;top:0;width:68px;height:43px;background:#d21f3a"></div><svg class="a" style="left:24px;top:8px;" width="20" height="26" viewBox="0 0 20 26"><path d="M1.3 9.3 L9.6 17 L1.3 24.8 M18 2.3 L10.6 9.8 L18 17.6" fill="none" stroke="#f9dede" stroke-width="1.7"/></svg><svg class="a" style="left:83px;top:8px;" width="24" height="28" viewBox="0 0 24 28"><g fill="none" stroke="#f9dede" stroke-width="1.9"><circle cx="4.8" cy="4.4" r="3.4"/><circle cx="4.8" cy="23.8" r="3.4"/><circle cx="16.9" cy="9.8" r="3.4"/><path d="M4.8 7.8 V20.4 M16.9 13.2 Q16.5 17 12 17 Q6 17 4.8 20"/></g></svg><span class="si" style="left:115.6px">main*</span><svg class="a" style="left:192px;top:12px;" width="28" height="22" viewBox="0 0 28 22"><g fill="none" stroke="#f9dede" stroke-width="2"><path d="M3 12 A11 9 0 0 1 24 8 M25 10 A11 9 0 0 1 4 14"/><path d="M20 7 L25 8.5 L26 3 M8 15 L3 13.5 L2 19"/></g></svg><svg class="a" style="left:250px;top:10px;" width="24" height="24" viewBox="0 0 24 24"><g fill="none" stroke="#f9dede" stroke-width="2"><circle cx="12" cy="12" r="10.8"/><path d="M7.5 7.5 L16.5 16.5 M16.5 7.5 L7.5 16.5"/></g></svg><span class="si" style="left:284px">0</span><svg class="a" style="left:306px;top:10px;" width="25" height="23" viewBox="0 0 25 23"><path d="M12.5 1.5 L24 21.5 H1 Z" fill="none" stroke="#f9dede" stroke-width="2" stroke-linejoin="round"/><path d="M12.5 8 V15 M12.5 17 V19.5" stroke="#f9dede" stroke-width="2.2"/></svg><span class="si" style="left:341px">1</span><svg class="a" style="left:390px;top:10px;" width="24" height="24" viewBox="0 0 24 24"><g fill="none" stroke="#f9dede" stroke-width="1.8"><path d="M5 3 Q1 8 5 14 M19 3 Q23 8 19 14 M8 6 Q6 8.5 8 11 M16 6 Q18 8.5 16 11 M12 10 L7 23 M12 10 L17 23 M9 18 H15"/><circle cx="12" cy="8.5" r="1.6" fill="#f9dede"/></g></svg><span class="si" style="left:422.6px">0</span><svg class="a" style="left:1067.6px;top:11px;" width="23" height="21" viewBox="0 0 23 21"><g fill="none" stroke="#f9dede" stroke-width="1.8"><path d="M1 10.5 Q11.5 0 22 10.5 Q11.5 21 1 10.5"/><circle cx="11.5" cy="10.5" r="3.5"/><path d="M2 1 L21 20"/></g></svg><span class="si" style="left:1100.7px">Compile Hero: Off</span><span class="si" style="left:1336.6px">Ln 37, Col 1</span><span class="si" style="left:1505.8px">Spaces: 2</span><span class="si" style="left:1650.4px">UTF-8</span><span class="si" style="left:1755px">LF</span><span class="si" style="left:1813px;font-size:22px">{ }</span><span class="si" style="left:1851px">TypeScript JSX</span><svg class="a" style="left:2054.5px;top:10px;" width="21" height="25" viewBox="0 0 21 25"><g fill="none" stroke="#f9dede" stroke-width="2"><path d="M4 16 A9 9 0 1 1 17 16"/><path d="M7 13 A5 5 0 1 1 14 13"/></g><circle cx="10.5" cy="10" r="2.2" fill="#f9dede"/><path d="M10.5 13 V24" stroke="#f9dede" stroke-width="3"/></svg><span class="si" style="left:2086.6px">Go Live</span><svg class="a" style="left:2204px;top:10px;" width="24" height="24" viewBox="0 0 24 24"><g fill="none" stroke="#f9dede" stroke-width="1.8"><path d="M1 23 L6 18 M23 1 L18 6"/><path d="M6 12 L12 18 L9 21 Q6 22 4 20 Q2 18 3 15 Z"/><path d="M12 6 L18 12 L21 9 Q22 6 20 4 Q18 2 15 3 Z"/><path d="M8 14 L10.5 11.5 M10 16 L12.5 13.5"/></g></svg><span class="si" style="left:2238px">Ninja</span><svg class="a" style="left:2329.7px;top:10px;" width="21" height="24" viewBox="0 0 21 24"><g fill="none" stroke="#f9dede" stroke-width="2"><path d="M3 18 V10 A7.5 7.5 0 0 1 18 10 V18 L20 20 H1 Z" stroke-linejoin="round"/><path d="M8 21 A2.5 2.5 0 0 0 13 21"/></g></svg></div>
</div>
<div class="winborder"></div>
</body></html>
